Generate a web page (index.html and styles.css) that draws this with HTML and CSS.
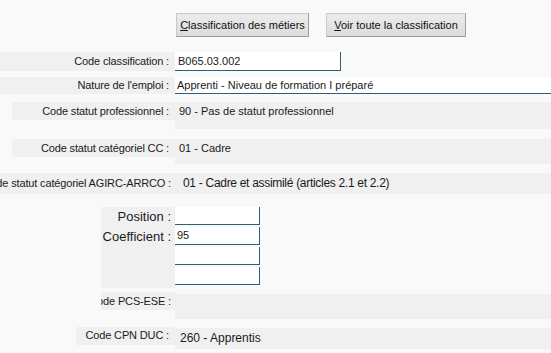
FILE: index.html
```html
<!DOCTYPE html>
<html lang="fr">
<head>
<meta charset="utf-8">
<title>Classification</title>
<link rel="stylesheet" href="styles.css">
</head>
<body>
<div class="page">
  <div class="toolbar">
    <button class="btn b1"><u>C</u>lassification des métiers</button>
    <button class="btn b2"><u>V</u>oir toute la classification</button>
  </div>

  <div class="row r1">
    <div class="lab"><div class="lbox full">Code classification :</div></div>
    <div class="val"><div class="input in-code">B065.03.002</div></div>
  </div>

  <div class="row r2">
    <div class="lab"><div class="lbox full">Nature de l'emploi :</div></div>
    <div class="val"><div class="input in-full">Apprenti - Niveau de formation I préparé</div></div>
  </div>

  <div class="row r3">
    <div class="lab"><div class="lbox w-prof">Code statut professionnel :</div></div>
    <div class="val"><div class="vbox">90 - Pas de statut professionnel</div></div>
  </div>

  <div class="row r4">
    <div class="lab"><div class="lbox w-prof">Code statut catégoriel CC :</div></div>
    <div class="val"><div class="vbox">01 - Cadre</div></div>
  </div>

  <div class="row r5">
    <div class="lab"><div class="lbox full mid">Code statut catégoriel AGIRC-ARRCO :</div></div>
    <div class="val"><div class="vbox big tight">01 - Cadre et assimilé (articles 2.1 et 2.2)</div></div>
  </div>

  <div class="row r6">
    <div class="lab"><div class="lbox w-pos large">Position :<br>Coefficient :</div></div>
    <div class="val">
      <div class="stack">
        <div class="input in-small"></div>
        <div class="input in-small">95</div>
        <div class="input in-small"></div>
        <div class="input in-small"></div>
      </div>
    </div>
  </div>

  <div class="row r7">
    <div class="lab"><div class="lbox w-pos"><span>Code PCS-ESE :</span></div></div>
    <div class="val"><div class="vbox"></div></div>
  </div>

  <div class="row r8">
    <div class="lab"><div class="lbox w-cpn">Code CPN DUC :</div></div>
    <div class="val"><div class="vbox big">260 - Apprentis</div></div>
  </div>
</div>
</body>
</html>
```

FILE: styles.css
```css
html, body {
  margin: 0;
  padding: 0;
  background: #f9f9f9;
}
body {
  font-family: "Liberation Sans", Arial, sans-serif;
  font-size: 11px;
  color: #1a1a1a;
  width: 551px;
  height: 353px;
  overflow: hidden;
}
.page {
  display: flex;
  flex-direction: column;
}
.toolbar {
  display: flex;
  gap: 17px;
  padding: 13px 0 0 176px;
}
.btn {
  height: 24px;
  padding: 0;
  font-family: "Liberation Sans", Arial, sans-serif;
  font-size: 11px;
  color: #111;
  background: linear-gradient(#ececec, #dcdcdc);
  border: 1px solid;
  border-color: #c9c9c9 #9c9c9c #9c9c9c #c9c9c9;
  border-radius: 0;
}
.b1 { width: 133px; }
.b2 { width: 140px; }

.row {
  display: grid;
  grid-template-columns: 175px 1fr;
  align-items: start;
}
.lab {
  display: flex;
  justify-content: flex-end;
  overflow: hidden;
}
.lbox {
  background: #f0f0f0;
  display: flex;
  justify-content: flex-end;
  white-space: nowrap;
  overflow: hidden;
  padding-right: 6px;
  text-align: right;
  box-sizing: border-box;
  flex-shrink: 0;
  letter-spacing: -0.15px;
}
.lbox span { flex-shrink: 0; }
.full { width: 175px; }
.w-prof { width: 163px; }
.w-pos { width: 74px; }
.w-cpn { width: 99px; }

.input {
  background: #fff;
  border-right: 1px solid #305f6f;
  border-bottom: 1px solid #305f6f;
  box-sizing: border-box;
  padding-left: 3px;
  white-space: nowrap;
  overflow: hidden;
}
.in-code { width: 166px; height: 19px; line-height: 18px; }
.in-full { width: 100%; height: 17px; line-height: 16px; border-right: 0; padding-left: 2px; }
.in-small { width: 85px; height: 18px; line-height: 17px; padding-left: 2px; }
.stack {
  display: flex;
  flex-direction: column;
  gap: 2px;
}
.vbox {
  background: #f0f0f0;
  box-sizing: border-box;
  padding-left: 4px;
  white-space: nowrap;
}
.big { font-size: 12px; padding-left: 5px; }
.tight { letter-spacing: -0.3px; }

.r1 { margin-top: 15px; }
.r1 .lbox { height: 19px; line-height: 19px; }

.r2 { margin-top: 6px; }
.r2 .lbox { height: 17px; line-height: 17px; }

.r3 { margin-top: 8px; }
.r3 .lbox { height: 18px; padding-top: 3px; line-height: 13px; }
.r3 .vbox { height: 27px; padding-top: 3px; line-height: 13px; }

.r4 { margin-top: 10px; }
.r4 .lbox { height: 18px; padding-top: 3px; line-height: 13px; }
.r4 .vbox { height: 25px; padding-top: 3px; line-height: 13px; }

.r5 { margin-top: 9px; }
.r5 .lbox { height: 21px; line-height: 21px; padding-right: 4px; }
.r5 .vbox { height: 21px; line-height: 21px; padding-left: 8px; }

.r6 { margin-top: 13px; }
.r6 .lbox { height: 81px; line-height: 20px; font-size: 13px; padding-right: 4px; padding-top: 0; letter-spacing: 0; }
.large { align-items: flex-start; }

.r7 { margin-top: 4px; }
.r7 .lbox { height: 18px; line-height: 18px; padding-right: 4px; }
.r7 .vbox { height: 25px; margin-top: 2px; }

.r8 { margin-top: 8px; }
.r8 .lbox { height: 18px; line-height: 16px; }
.r8 .vbox { height: 21px; line-height: 21px; margin-top: 1px; }
```
